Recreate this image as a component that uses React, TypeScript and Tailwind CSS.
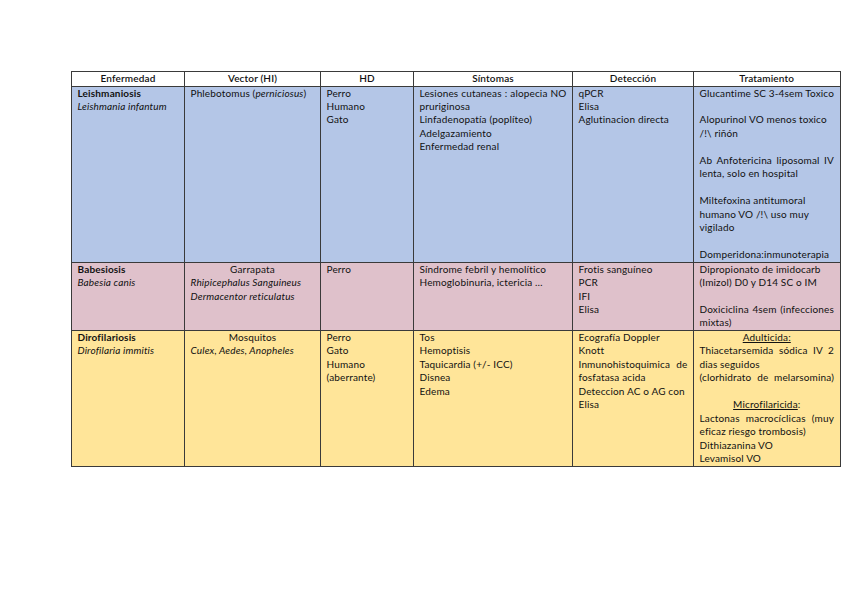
import React from 'react'

type Line = {
  text?: React.ReactNode
  justify?: boolean
  center?: boolean
}

type Cell = Line[]

type Row = {
  bg: string
  cells: Cell[]
}

const L = (text?: React.ReactNode, opts: Partial<Line> = {}): Line => ({ text, ...opts })
const blank = (): Line => ({})

const headers = ['Enfermedad', 'Vector (HI)', 'HD', 'Síntomas', 'Detección', 'Tratamiento']

const rows: Row[] = [
  {
    bg: 'bg-[#b4c6e7]',
    cells: [
      [L(<b>Leishmaniosis</b>), L(<i>Leishmania infantum</i>)],
      [L(<>Phlebotomus (<i>perniciosus</i>)</>)],
      [L('Perro'), L('Humano'), L('Gato')],
      [
        L('Lesiones cutaneas : alopecia NO', { justify: true }),
        L('pruriginosa'),
        L('Linfadenopatía (poplíteo)'),
        L('Adelgazamiento'),
        L('Enfermedad renal')
      ],
      [L('qPCR'), L('Elisa'), L('Aglutinacion directa')],
      [
        L('Glucantime SC 3-4sem Toxico', { justify: true }),
        blank(),
        L('Alopurinol VO menos toxico'),
        L('/!\\ riñón'),
        blank(),
        L('Ab Anfotericina liposomal IV', { justify: true }),
        L('lenta, solo en hospital'),
        blank(),
        L('Miltefoxina antitumoral'),
        L('humano VO /!\\ uso muy'),
        L('vigilado'),
        blank(),
        L('Domperidona:inmunoterapia', { justify: true })
      ]
    ]
  },
  {
    bg: 'bg-[#dfc1cb]',
    cells: [
      [L(<b>Babesiosis</b>), L(<i>Babesia canis</i>)],
      [
        L('Garrapata', { center: true }),
        L(<i>Rhipicephalus Sanguineus</i>),
        L(<i>Dermacentor reticulatus</i>)
      ],
      [L('Perro')],
      [L('Síndrome febril y hemolítico'), L('Hemoglobinuria, ictericia …')],
      [L('Frotis sanguíneo'), L('PCR'), L('IFI'), L('Elisa')],
      [
        L('Dipropionato de imidocarb'),
        L('(Imizol) D0 y D14 SC o IM'),
        blank(),
        L('Doxiciclina 4sem (infecciones', { justify: true }),
        L('mixtas)')
      ]
    ]
  },
  {
    bg: 'bg-[#ffe599]',
    cells: [
      [L(<b>Dirofilariosis</b>), L(<i>Dirofilaria immitis</i>)],
      [L('Mosquitos', { center: true }), L(<i>Culex, Aedes, Anopheles</i>)],
      [L('Perro'), L('Gato'), L('Humano'), L('(aberrante)')],
      [L('Tos'), L('Hemoptisis'), L('Taquicardia (+/- ICC)'), L('Disnea'), L('Edema')],
      [
        L('Ecografía Doppler'),
        L('Knott'),
        L('Inmunohistoquimica de', { justify: true }),
        L('fosfatasa acida'),
        L('Deteccion AC o AG con'),
        L('Elisa')
      ],
      [
        L(<span className="underline">Adulticida:</span>, { center: true }),
        L('Thiacetarsemida sódica IV 2', { justify: true }),
        L('dias seguidos'),
        L('(clorhidrato de melarsomina)', { justify: true }),
        blank(),
        L(<><span className="underline">Microfilaricida</span>:</>, { center: true }),
        L('Lactonas macrocíclicas (muy', { justify: true }),
        L('eficaz riesgo trombosis)'),
        L('Dithiazanina VO'),
        L('Levamisol VO')
      ]
    ]
  }
]

const colWidths = ['w-[113px]', 'w-[136px]', 'w-[93px]', 'w-[159px]', 'w-[121px]', 'w-[142px]']

const CellLines: React.FC<{ lines: Cell }> = ({ lines }) => (
  <>
    {lines.map((line, i) => (
      <div
        key={i}
        className={`h-[13.48px] whitespace-nowrap ${
          line.center ? 'text-center' : line.justify ? 'text-justify [text-align-last:justify]' : 'text-left'
        }`}
      >
        {line.text ?? '\u00a0'}
      </div>
    ))}
  </>
)

export default function App() {
  return (
    <div className="min-h-[599px] w-[848px] bg-white pl-[71px] pt-[71px] text-[#111] font-['Lato','Liberation_Sans',sans-serif] text-[10px] tracking-[0.15px] leading-[13.48px]">
      <table className="table-fixed border-collapse">
        <colgroup>
          {colWidths.map((w, i) => (
            <col key={i} className={w} />
          ))}
        </colgroup>
        <thead>
          <tr className="bg-white">
            {headers.map((h) => (
              <th
                key={h}
                className="h-[14.5px] border border-[#3a3a3a] p-0 text-center font-semibold leading-[13.5px]"
              >
                {h}
              </th>
            ))}
          </tr>
        </thead>
        <tbody>
          {rows.map((row, r) => (
            <tr key={r} className={row.bg}>
              {row.cells.map((cell, c) => (
                <td key={c} className="border border-[#3a3a3a] px-[5.5px] py-0 align-top">
                  <CellLines lines={cell} />
                </td>
              ))}
            </tr>
          ))}
        </tbody>
      </table>
    </div>
  )
}
